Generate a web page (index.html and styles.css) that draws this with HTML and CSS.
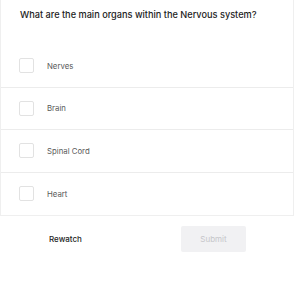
FILE: index.html
```html
<!DOCTYPE html>
<html>
<head>
<meta charset="utf-8">
<link rel="stylesheet" href="styles.css">
</head>
<body>
<div class="card">
  <div class="question">What are the main organs within the Nervous system?</div>
  <div class="option"><span class="box"></span><span class="label">Nerves</span></div>
  <div class="option"><span class="box"></span><span class="label">Brain</span></div>
  <div class="option"><span class="box"></span><span class="label">Spinal Cord</span></div>
  <div class="option"><span class="box"></span><span class="label">Heart</span></div>
</div>
<div class="actions">
  <button class="rewatch">Rewatch</button>
  <button class="submit">Submit</button>
</div>
</body>
</html>
```
FILE: styles.css
```css
html, body {
  margin: 0;
  padding: 0;
  background: #ffffff;
  font-family: Inter, "Noto Sans", sans-serif;
}
.card {
  width: 294px;
  border: 1px solid #efefef;
  border-top: none;
  box-sizing: border-box;
}
.question {
  height: 45px;
  padding: 9px 0 0 19px;
  box-sizing: border-box;
  font-size: 9.2px;
  font-weight: 500;
  color: #1c1c1c;
  line-height: 12px;
}
.option {
  height: 42.5px;
  box-sizing: border-box;
  display: flex;
  align-items: center;
  padding-left: 18px;
  border-bottom: 1px solid #ececec;
}
.option:last-child { border-bottom: none; }
.box {
  width: 13px;
  height: 13px;
  border: 1px solid #e2e2e2;
  border-radius: 2px;
  flex: none;
}
.label {
  margin-left: 13px;
  font-size: 7.8px;
  color: #5a5a5a;
}
.actions {
  display: flex;
  align-items: center;
  height: 46px;
}
.actions button {
  font-family: inherit;
  border: none;
  cursor: pointer;
}
.rewatch {
  background: none;
  width: 131px;
  height: 26px;
  font-size: 8px;
  font-weight: 500;
  color: #1e1e1e;
  padding: 0;
}
.submit {
  margin-left: 50px;
  width: 65px;
  height: 26px;
  background: #f1f1f3;
  border-radius: 2px;
  font-size: 8px;
  color: #c6c6ca;
}
```
